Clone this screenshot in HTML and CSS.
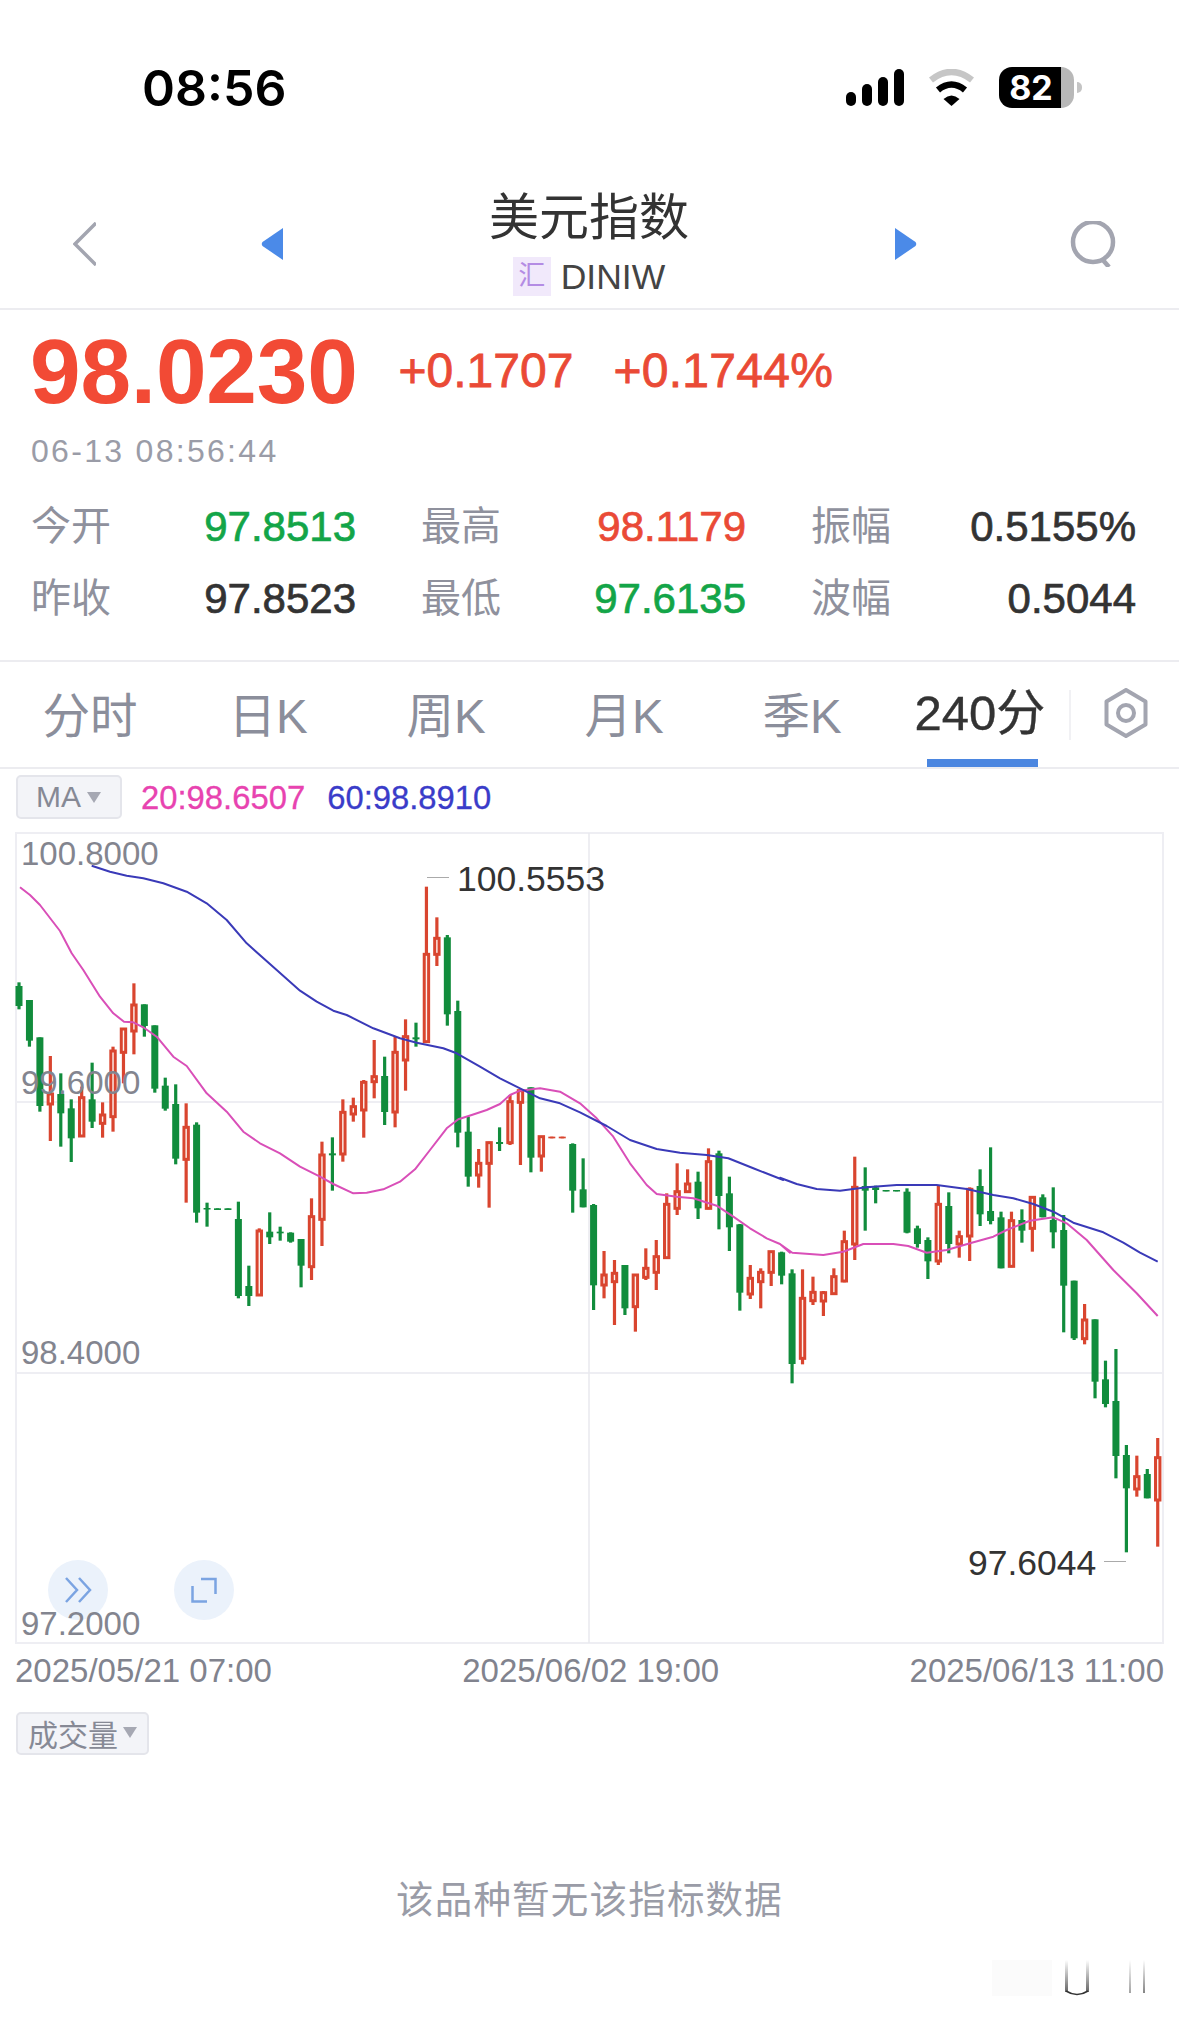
FILE: index.html
```html
<!DOCTYPE html>
<html lang="zh-CN">
<head>
<meta charset="utf-8">
<title>美元指数</title>
<link rel="stylesheet" href="styles.css">
</head>
<body>
<div class="page">
  <header class="status">
    <div class="clock">08:56</div>
    <div class="status-icons">
      <div class="signal"><i class="b1"></i><i class="b2"></i><i class="b3"></i><i class="b4"></i></div>
      <svg class="wifi" width="49" height="37" viewBox="0 0 49 37"><path d="M4 11Q24.5-5 45 11" fill="none" stroke="#c6c6c6" stroke-width="6.5" stroke-linecap="butt"/><path d="M11 21Q24.5 10 38 21" fill="none" stroke="#000" stroke-width="6.5"/><path d="M16.5 30Q24.5 23 32.5 30L24.5 37Z" fill="#000"/></svg>
      <div class="battery">82</div>
    </div>
  </header>

  <nav class="nav">
    <svg class="back" width="23" height="44" viewBox="0 0 23 44"><path d="M23 1 2 22 23 43" fill="none" stroke="#a3a5b0" stroke-width="3.5"/></svg>
    <svg width="22" height="32" viewBox="0 0 22 32"><path d="M22 0V32L1.500 18Q0 16 1.500 14Z" fill="#4b8ae8"/></svg>
    <div class="title-block">
      <div class="title">美元指数</div>
      <div class="sub"><span class="badge">汇</span><span class="code">DINIW</span></div>
    </div>
    <svg width="22" height="32" viewBox="0 0 22 32"><path d="M0 0V32L20.500 18Q22 16 20.500 14Z" fill="#4b8ae8"/></svg>
    <svg class="search" width="46" height="46" viewBox="0 0 46 46"><circle cx="23" cy="21" r="20" fill="none" stroke="#a3a5b0" stroke-width="4.500"/><path d="M32 38 39 46" stroke="#a3a5b0" stroke-width="4.500" fill="none"/></svg>
  </nav>

  <section class="quote">
    <div class="price-row">
      <div class="price">98.0230</div>
      <div class="change first">+0.1707</div>
      <div class="change second">+0.1744%</div>
    </div>
    <div class="stamp">06-13 08:56:44</div>
    <div class="stats">
      <div class="stat"><span class="k">今开</span><span class="v green">97.8513</span></div>
      <div class="stat"><span class="k">最高</span><span class="v red">98.1179</span></div>
      <div class="stat"><span class="k">振幅</span><span class="v">0.5155%</span></div>
      <div class="stat"><span class="k">昨收</span><span class="v">97.8523</span></div>
      <div class="stat"><span class="k">最低</span><span class="v green">97.6135</span></div>
      <div class="stat"><span class="k">波幅</span><span class="v">0.5044</span></div>
    </div>
  </section>

  <div class="tabs">
    <div class="tab">分时</div>
    <div class="tab">日K</div>
    <div class="tab">周K</div>
    <div class="tab">月K</div>
    <div class="tab">季K</div>
    <div class="tab active"><span class="active-label">240分</span></div>
    <div class="gear">
      <svg width="44" height="50" viewBox="0 0 44 50"><path d="M22 2 41.500 13.500V36.500L22 48 2.500 36.500V13.500Z" fill="none" stroke="#a3a5b0" stroke-width="4" stroke-linejoin="round"/><circle cx="22" cy="25" r="8" fill="none" stroke="#a3a5b0" stroke-width="4"/></svg>
    </div>
  </div>

  <div class="ma-row">
    <div class="pill ma-pill">MA<i class="caret"></i></div>
    <span class="ma20">20:98.6507</span>
    <span class="ma60">60:98.8910</span>
  </div>

  <div class="chart">
    <svg id="plot" class="plot" width="1150" height="813" viewBox="15 832 1150 813"></svg>
    <span class="axis a1">100.8000</span>
    <span class="axis a2">99.6000</span>
    <span class="axis a3">98.4000</span>
    <div class="round r1"><svg width="28" height="26" viewBox="0 0 28 26"><path d="M2 1 13 13 2 25M15 1 26 13 15 25" fill="none" stroke="#7ba4e2" stroke-width="2.500"/></svg></div>
    <div class="round r2"><svg width="26" height="26" viewBox="0 0 26 26"><path d="M10 2H24.500V17M1.500 9V24.500H16" fill="none" stroke="#7ba4e2" stroke-width="2.500"/></svg></div>
    <span class="axis a4">97.2000</span>
    <span class="mark hi">100.5553</span><i class="lead lead-hi"></i>
    <span class="mark lo">97.6044</span><i class="lead lead-lo"></i>
  </div>

  <div class="dates"><span>2025/05/21 07:00</span><span>2025/06/02 19:00</span><span>2025/06/13 11:00</span></div>

  <div class="pill vol-pill">成交量<i class="caret"></i></div>

  <div class="empty">该品种暂无该指标数据</div>

  <svg class="smudge" width="170" height="50" viewBox="0 0 170 50" aria-hidden="true">
    <defs><linearGradient id="fade" x1="0" y1="0" x2="0" y2="1"><stop offset="0" stop-color="#fff"/><stop offset="1" stop-color="#666"/></linearGradient></defs>
    <rect x="0" y="2" width="60" height="36" fill="#fbfbfb"/>
    <rect x="73" y="2" width="3" height="32" fill="url(#fade)"/>
    <rect x="94" y="2" width="3" height="32" fill="url(#fade)"/>
    <path d="M74 33Q85 40 96 33" fill="none" stroke="#333" stroke-width="1.500"/>
    <rect x="137" y="2" width="2" height="33" fill="url(#fade)" opacity=".6"/>
    <rect x="151" y="2" width="2" height="33" fill="url(#fade)" opacity=".8"/>
  </svg>
</div>
<script src="chart.js"></script>
</body>
</html>
```
FILE: styles.css
```css
* { box-sizing: border-box; }
html, body { margin: 0; background: #fff; }
body { font-family: "Liberation Sans", "Noto Sans CJK SC", sans-serif; color: #333; }
.page { position: relative; width: 1179px; height: 2021px; overflow: hidden; background: #fff; }

.status { height: 175px; display: flex; justify-content: space-between; align-items: center; padding: 0 105px 0 142px; }
.clock { font-family: Inter, "Liberation Sans", sans-serif; font-weight: 600; font-size: 50px; color: #000; }
.status-icons { display: flex; align-items: center; gap: 23px; }
.signal { display: flex; align-items: flex-end; gap: 6px; }
.signal i { display: block; width: 10px; border-radius: 5px; background: #000; }
.b1 { height: 14px; } .b2 { height: 22px; } .b3 { height: 29px; } .b4 { height: 37px; }
.battery { position: relative; width: 75px; height: 41px; border-radius: 13px; padding-right: 11px;
  background: linear-gradient(90deg, #000 0 62px, #b8b8b8 62px);
  color: #fff; font-family: Inter, "Liberation Sans", sans-serif; font-weight: 700; font-size: 34px; line-height: 41px; text-align: center; }
.battery::after { content: ""; position: absolute; left: 78px; top: 15px; width: 5px; height: 11px; background: #c4c4c4; border-radius: 0 5px 5px 0; }

.nav { display: grid; grid-template-columns: 188px 22px 612px 22px auto; align-items: center; padding: 18px 0 13px 73px; border-bottom: 2px solid #ececf0; height: 135px; }
.nav > svg { margin-top: -2px; }
.nav > .search { margin-left: 153px; }
.title-block { display: flex; flex-direction: column; align-items: center; }
.title { font-size: 50px; line-height: 50px; color: #333; }
.sub { display: flex; align-items: center; gap: 10px; margin-top: 14px; height: 39px; }
.badge { width: 38px; height: 39px; background: #f1e9fb; color: #b48ce4; font-size: 27px; line-height: 39px; text-align: center; }
.code { font-size: 35.500px; line-height: 42px; color: #444; padding-top: 1px; }

.quote { padding: 15px 30px 0; height: 352px; border-bottom: 2px solid #ececf0; }
.price-row { display: flex; align-items: center; height: 90px; }
.price { font-size: 91px; font-weight: 700; line-height: 90px; padding-top: 3px; color: #f24a35; letter-spacing: -.2px; }
.change { font-size: 48px; color: #ea4a36; -webkit-text-stroke: .8px #ea4a36; }
.first { margin-left: 41px; }
.second { margin-left: 40px; letter-spacing: .3px; }
.stamp { margin: 16px 0 0 1px; font-size: 32px; line-height: 40px; color: #9a9ca7; letter-spacing: 2.3px; }
.stats { display: grid; grid-template-columns: repeat(3, 325px); column-gap: 65px; margin: 18px 0 0 1px; }
.stat { display: flex; justify-content: space-between; align-items: center; height: 72px; }
.k { font-size: 40px; line-height: 50px; margin-top: 2px; color: #8f919d; }
.v { font-size: 42px; line-height: 50px; margin-top: 4px; color: #333; -webkit-text-stroke: .7px currentColor; }
.green { color: #13a548; }
.red { color: #ea4a36; }

.tabs { display: flex; height: 107px; padding: 0 0 4px 1px; border-bottom: 2px solid #ececf0; }
.tab { position: relative; width: 178px; display: flex; align-items: center; justify-content: center; font-size: 47.500px; color: #8b8e9b; }
.active { color: #333; }
.active-label { display: block; white-space: nowrap; font-size: 49px; line-height: 60px; -webkit-text-stroke: .4px #333; }
.active::after { content: ""; position: absolute; left: 36px; bottom: -4px; width: 111px; height: 8px; background: #4b86e0; }
.gear { flex: 1; display: flex; justify-content: center; align-items: center; position: relative; padding-left: 3px; }
.gear::before { content: ""; position: absolute; left: 0; top: 28px; height: 50px; width: 2px; background: #f1f1f4; }

.ma-row { display: flex; align-items: center; padding: 6px 0 0 16px; height: 50px; font-size: 32.800px; -webkit-text-stroke: .3px currentColor; }
.pill { display: flex; align-items: center; background: #f3f4f8; border: 2px solid #e4e5eb; border-radius: 5px; color: #868995; -webkit-text-stroke: 0; }
.ma-pill { width: 106px; height: 44px; padding-left: 18px; font-size: 30px; }
.caret { display: block; width: 0; height: 0; margin-left: 6px; border: 7px solid transparent; border-top: 11px solid #a6a8b3; border-bottom: 0; }
.ma20 { margin-left: 19px; padding-top: 2px; color: #e843b0; }
.ma60 { margin-left: 22px; padding-top: 2px; color: #3a3cc9; }

.chart { position: relative; width: 1150px; height: 813px; margin: 13px 0 0 15px; }
.plot { display: block; }
.axis { position: absolute; left: 6px; font-size: 33px; line-height: 36px; color: #83858f; }
.a1 { top: 4px; }
.a2 { top: 233px; }
.a3 { top: 503px; }
.a4 { top: 774px; }
.mark { position: absolute; font-size: 35.500px; line-height: 38px; color: #333; }
.hi { left: 442px; top: 28px; }
.lo { left: 953px; top: 712px; }
.lead { position: absolute; display: block; width: 22px; height: 1px; background: #aaa; }
.lead-hi { left: 412px; top: 45px; }
.lead-lo { left: 1089px; top: 729px; }
.round { position: absolute; top: 728px; width: 60px; height: 60px; border-radius: 50%; background: #ebf2fb; display: flex; align-items: center; justify-content: center; }
.r1 { left: 33px; }
.r2 { left: 159px; }

.dates { display: flex; justify-content: space-between; width: 1149px; margin: 6px 0 0 15px; font-size: 33px; line-height: 40px; color: #81838e; }
.vol-pill { width: 133px; height: 43px; margin: 21px 0 0 16px; padding-left: 10px; padding-bottom: 2px; font-size: 30px; }
.vol-pill .caret { margin-left: 5px; }
.empty { margin-top: 120px; text-align: center; font-size: 37.500px; line-height: 50px; letter-spacing: 1.200px; color: #9a9ca7; }
.smudge { position: absolute; left: 992px; top: 1958px; }
```
FILE: chart.js
```js
// Candles: [type, wickTop, bodyTop, bodyBottom, wickBottom], y in thirds of a pixel above a base line.
var first = [
  'g487,498,558,568','g540,540,662,680','g652,652,858,875','r708,822,852,963','g760,822,880,980','g838,865,955,1026',
  'r800,833,948,948','g728,838,905,924','r847,885,910,953','r680,693,890,935','r625,627,697,790','r490,555,633,703',
  'g553,553,618,650','g616,616,806,818','g773,797,866,872','g793,852,1016,1033','r850,922,1018,1148','g907,914,1178,1208',
  'g1148,1164,1168,1220','g1165,1165,1170,1170','g1165,1165,1170,1170','g1145,1197,1428,1435','g1337,1398,1428,1458',
  'r1225,1233,1425,1428','g1177,1235,1252,1272','g1220,1235,1240,1262','g1237,1238,1265,1268','g1257,1257,1337,1402',
  'r1135,1190,1340,1380','r965,1005,1198,1278','g952,1000,1006,1112','r838,877,1002,1025','r833,860,882,905',
  'r780,787,870,953','r660,770,785,835','g710,768,876,915','r650,697,876,922',
  'r598,650,720,812','g608,652,658,680','r200,403,665,668','r292,355,403,438','g345,352,583,617','g542,573,938,982',
  'g890,935,1070,1100','r987,1030,1065,1103','r965,968,1030,1163','g922,966,972,993','r825,845,968,975','r808,812,847,1035',
  'g802,802,1013,1057','r948,950,1008,1055','r950,950,955,955','r950,950,955,955','g970,972,1112,1178','g1015,1108,1162,1162',
  'g1152,1155,1396,1470','r1293,1365,1395,1435','r1320,1360,1385,1515','g1335,1335,1465,1485','r1362,1365,1460,1535',
  'r1285,1345,1372,1380','r1260,1310,1357,1410','r1120,1153,1313,1315','r1030,1115,1165,1185','r1048,1092,1115,1117',
  'g1055,1085,1165,1197','r985,1025,1165,1168','g992,1000,1128,1228','g1070,1120,1222,1293','g1212,1213,1418,1472',
  'r1335,1375,1422,1437','r1345,1357,1385,1465','r1295,1295,1357,1398','g1295,1297,1367,1393'
];
var second = [
  'g508,520,792,850','r508,595,775,793','r530,577,602,615','r573,578,603,648','r505,530,581,583','r392,425,543,547',
  'r170,262,432,480','g202,258,272,392','g257,262,270,310','g270,270,274,274','g270,270,274,274','g265,275,398,400',
  'g377,385,432,443','g412,420,484,537','r255,313,483,495','g277,318,432,460','r392,410,432,473','r262,268,408,483',
  'g208,258,343,378','g142,333,363,373','g335,352,505,505','r335,362,499,502','g328,360,392,428','r290,292,385,455',
  'g283,292,352,352','g262,360,397,445','g345,390,557,697','g542,542,715,720','r612,660,716,733','g658,658,845,895',
  'g782,838,912,922','g747,903,1068,1135','g1035,1065,1165,1357','r1067,1130,1167,1190','g1107,1122,1195,1195','r1014,1073,1200,1340'
];
var pink = [
  [0, 820, [60,202,90,225,120,255,180,333,215,400,250,450,300,530,340,580,372,605,400,607,430,622,470,650,520,710,560,738,620,820,680,875,730,935,780,970,840,1000,900,1040,960,1070,1000,1092,1060,1120,1100,1118,1150,1108,1200,1085]],
  [400, 820, [45,1048,90,990,140,925,175,898,215,885,260,870,300,852,330,825,360,812,420,805,480,815,540,850,590,895,640,950,690,1030,740,1095,770,1122,830,1130,880,1135,950,1157,1000,1190,1050,1225,1100,1255,1140,1272,1170,1298]],
  [780, 1100, [0,432,37,458,130,465,190,455,250,432,340,432,385,438,440,458,500,450,570,430,640,410,680,390,750,362,820,352,860,370,920,420,1000,510,1070,580,1133,648]]
];
var blue = [
  [0, 820, [275,137,330,155,380,167,430,175,490,190,560,215,620,250,680,300,740,370,830,450,900,512,950,545,1000,572,1040,585,1120,625,1200,655]],
  [400, 820, [50,668,130,685,170,700,240,740,300,775,360,805,420,835,480,850,540,877,620,918,690,960,770,987,840,998,920,1005,985,1015,1060,1045,1150,1080]],
  [780, 1100, [0,233,50,252,110,267,180,272,260,262,350,255,470,255,560,267,640,285,700,295,760,312,820,335,880,368,970,397,1030,428,1080,458,1133,485]]
];

var NS = 'http://www.w3.org/2000/svg';
var plot = document.getElementById('plot');
var GREEN = '#118c3c', RED = '#d9452f', GRID = '#eeeef3';

function add(tag, attrs) {
  var el = document.createElementNS(NS, tag);
  for (var k in attrs) el.setAttribute(k, attrs[k]);
  plot.appendChild(el);
}
function hline(y, x1, x2) { add('line', { x1: x1, x2: x2, y1: y, y2: y, stroke: GRID, 'stroke-width': 2 }); }
function vline(x, y1, y2, color, w) { add('line', { x1: x, x2: x, y1: y1, y2: y2, stroke: color, 'stroke-width': w }); }

add('rect', { x: 16, y: 833, width: 1147, height: 810, fill: 'none', stroke: GRID, 'stroke-width': 2 });
hline(1102, 16, 1163);
hline(1373, 16, 1163);
vline(589, 833, 1643, '#e9e9ee', 1.500);

function candle(spec, i, base) {
  var type = spec[0];
  var p = spec.slice(1).split(',').map(function (n) { return base + Number(n) / 3; });
  var x = 19 + 10.447 * i;
  var color = type === 'g' ? GREEN : RED;
  var h = p[2] - p[1];
  if (type === 'g' || h < 3) {
    vline(x, p[0], p[3], color, 3.200);
    add('rect', { x: x - 3.500, y: p[1], width: 7, height: Math.max(h, 1.500), fill: color });
  } else {
    vline(x, p[0], p[1], color, 3.200);
    vline(x, p[2], p[3], color, 3.200);
    add('rect', { x: x - 2.200, y: p[1], width: 4.400, height: h, fill: '#fdf1ed', stroke: color, 'stroke-width': 3 });
  }
}
first.forEach(function (s, i) { candle(s, i, 820); });
second.forEach(function (s, i) { candle(s, i + 74, 1100); });

function curve(segments, color) {
  var pts = [];
  segments.forEach(function (seg) {
    for (var i = 0; i < seg[2].length; i += 2) {
      pts.push((seg[0] + seg[2][i] / 3).toFixed(1) + ',' + (seg[1] + seg[2][i + 1] / 3).toFixed(1));
    }
  });
  add('polyline', { points: pts.join(' '), fill: 'none', stroke: color, 'stroke-width': 2, 'stroke-linejoin': 'round' });
}
curve(pink, '#d94fb8');
curve(blue, '#3a3ab8');
```
